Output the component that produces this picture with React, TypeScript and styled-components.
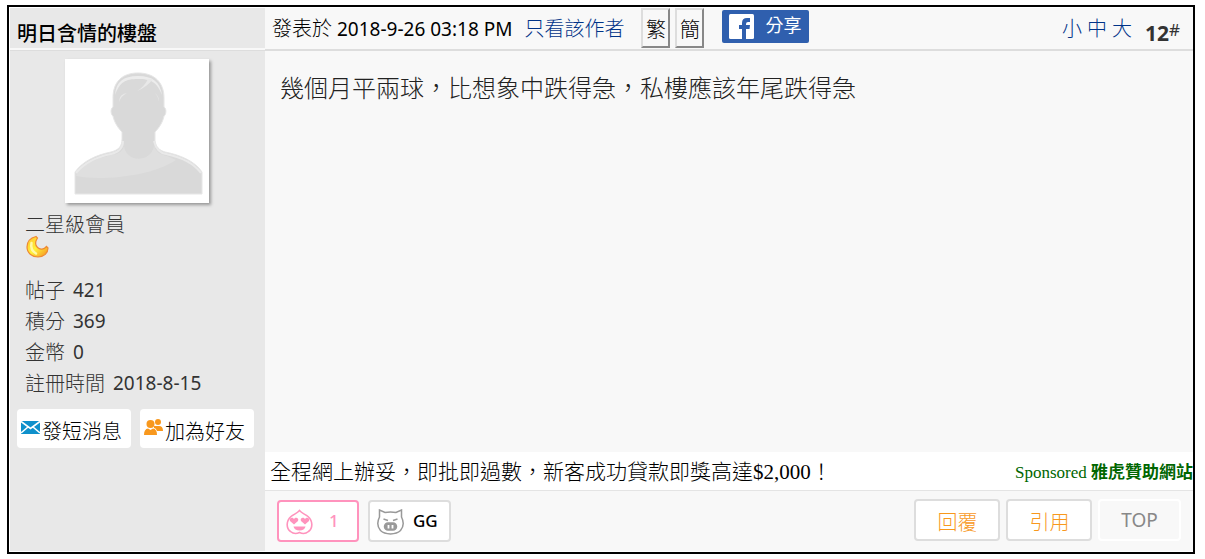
import React from "react";
import styled, { createGlobalStyle, css } from "styled-components";

const latin = `"Noto Sans"`;
const ui = `${latin}, "Noto Sans CJK TC", sans-serif`;
const cjk = `"Noto Sans CJK TC", ${latin}, sans-serif`;

const GlobalStyle = createGlobalStyle`
  *, *::before, *::after { box-sizing: border-box; }
  body { margin: 0; background: #fff; color: #000; font-family: ${ui}; font-size: 19px; }
  button { font-family: inherit; cursor: pointer; }
  a { text-decoration: none; }
`;

const Page = styled.main`
  padding: 5px 10px 5px 7px;
`;

const Post = styled.article`
  display: grid;
  grid-template-columns: 255px minmax(0, 1fr);
  border: 2px solid #000;
  padding: 1px 0 1px 1px;
`;

const Sidebar = styled.aside`
  background: #e8e8e8;
  display: flex;
  flex-direction: column;
`;

const Author = styled.h2`
  margin: 0;
  height: 42px;
  padding: 11px 7px 0;
  border-bottom: 2px solid #f8f8f8;
  font-size: 20px;
  line-height: 30px;
  font-weight: 500;
`;

const Profile = styled.div`
  border-top: 1px solid #ddd;
  padding: 8px 7px 0;
`;

const Avatar = styled.svg`
  display: block;
  width: 144px;
  height: 144px;
  margin: 0 0 0 48px;
  background: #fff;
  box-shadow: 2px 2px 3px rgba(0, 0, 0, 0.35);
`;

const Rank = styled.div`
  margin: 8px 0 0 8px;
  font: 300 20px/26px ${cjk};
  color: #333;
`;

const Moon = styled.svg`
  display: block;
  width: 24px;
  height: 24px;
  margin: -2px 0 0 8px;
`;

const Stats = styled.dl`
  margin: 16px 0 0 8px;
  color: #333;
  line-height: 31px;
`;

const Stat = styled.div`
  display: flex;
  gap: 8px;
  height: 31px;

  dt { font-size: 20px; font-weight: 300; }
  dd { margin: 0; }
`;

const Actions = styled.div`
  display: flex;
  gap: 9px;
  margin-top: 10px;
`;

const Action = styled.button`
  display: flex;
  align-items: center;
  justify-content: center;
  gap: 2px;
  width: 114px;
  height: 39px;
  padding: 4px 5px 0 0;
  border: 0;
  border-radius: 4px;
  background: #fff;
  color: #000;
  font-size: 20px;
  font-weight: 300;
  white-space: nowrap;

  svg { flex: none; width: 19px; height: 18px; margin-bottom: 8px; }
`;

const Main = styled.section`
  display: flex;
  flex-direction: column;
  background: #f8f8f8;
`;

const Header = styled.header`
  display: flex;
  align-items: flex-start;
  height: 43px;
  padding: 0 13px 0 7px;
  border-bottom: 2px solid #ddd;
  line-height: 41px;
  white-space: nowrap;
`;

const Posted = styled.span`
  font-size: 19px;
  span { font-size: 20px; font-weight: 300; }
`;

const HeaderLink = styled.a`
  color: #003388;
  font-size: 20px;
  font-weight: 300;
`;

const OnlyAuthor = styled(HeaderLink)`
  margin: 0 17px 0 12px;
`;

const ScriptButton = styled.button`
  width: 29px;
  height: 40px;
  margin-right: 5px;
  padding: 0;
  border: 2px solid;
  border-color: #ddd #888 #888 #ddd;
  background: #f8f8f8;
  color: #000;
  font-size: 20px;
  font-weight: 300;
`;

const Share = styled.button`
  display: flex;
  align-items: center;
  gap: 11px;
  width: 87px;
  height: 33px;
  margin: 2px 0 0 13px;
  padding: 0 0 0 7px;
  border: 0;
  border-radius: 2px;
  background: #2f5fae;
  color: #fff;
  font-size: 18px;
  line-height: 30px;

  svg { flex: none; width: 25px; height: 25px; }
  span { padding-bottom: 3px; }
`;

const Sizes = styled.nav`
  display: flex;
  gap: 5px;
  margin-left: auto;
`;

const Floor = styled.a`
  margin-left: 13px;
  color: #333;
  font: bold 21px/50px ${latin}, sans-serif;

  sup { font: 17px/1 ${latin}, sans-serif; vertical-align: 5px; }
`;

const Message = styled.div`
  min-height: 401px;
  padding: 18px 15px;
  color: #222;
  font: 300 24px/36px ${cjk};
`;

const Sponsor = styled.div`
  display: flex;
  justify-content: space-between;
  align-items: center;
  height: 39px;
  padding: 2px 0 0 5px;
  border-bottom: 1px solid #e4e4e4;
  background: #fff;
  overflow: hidden;
  white-space: nowrap;
`;

const AdLink = styled.a`
  color: #000;
  font: 300 21px/36px "Liberation Serif", "Noto Sans CJK TC", serif;
`;

const SponsorName = styled.a`
  padding-top: 2px;
  color: #060;
  font: 17px/36px "Liberation Serif", "Noto Sans CJK TC", serif;
`;

const Footer = styled.footer`
  display: flex;
  justify-content: space-between;
  height: 60px;
  padding: 8px 12px 0;
`;

const Group = styled.div<{ $gap: number }>`
  display: flex;
  gap: ${(p) => p.$gap}px;
`;

const footButton = css`
  height: 42px;
  border: 2px solid #ddd;
  border-radius: 4px;
  background: #fff;
`;

const Reaction = styled.button<{ $active?: boolean }>`
  ${footButton}
  display: flex;
  align-items: center;
  width: ${(p) => (p.$active ? 82 : 83)}px;
  margin-top: 1px;
  padding: 0 7px 2px;
  gap: ${(p) => (p.$active ? 16 : 9)}px;
  font-size: 17px;
  font-weight: 500;
  color: ${(p) => (p.$active ? "#ff93bd" : "#000")};
  border-color: ${(p) => (p.$active ? "#ff93bd" : "#ddd")};

  svg { flex: none; width: 27px; height: 26px; margin-top: 3px; }
`;

const FootLink = styled.button<{ $plain?: boolean }>`
  ${footButton}
  width: ${(p) => (p.$plain ? 83 : 86)}px;
  padding: 3px 0 0 1px;
  font-size: 20px;
  font-weight: 300;
  color: #f8981d;
  ${(p) =>
    p.$plain &&
    css`
      padding: 0;
      border-color: #fff;
      background: #f8f8f8;
      color: #888;
      font-size: 19px;
      font-weight: 400;
    `}
`;

const AvatarArt = () => (
  <Avatar viewBox="0 0 144 144" role="img" aria-label="avatar">
    <path d="M10 135V113C18 102 31 96 46 93 54 91 57 87 57 80V73C52 68 49 62 48 57 46 56 45 50 48 48V39C48 23 57 14 73 14S99 23 99 39V48C102 50 101 56 99 57 98 62 95 68 90 73V82C91 88 94 91 100 93 115 96 130 102 137 113V135Z" fill="#d9d9d9" stroke="#e6e6e6" />
    <path d="M11 117C15 105 34 99 47 96 55 95 58 91 59 87 61 104 86 104 89 87 91 93 96 96 102 97L111 101C86 118 35 122 11 117Z" fill="#dfdfdf" />
    <path d="M50 36C51 23 58 17 73 17S95 23 97 36C92 23 86 20 73 20S55 23 50 36Z" fill="#ececec" />
    <path d="M72 32Q82 28 88 20L83 20Q79 28 72 32M54 43Q54 35 62 34Q56 37 54 43M94 43Q94 37 90 34Q93 37 94 43" fill="#e8e8e8" />
    <path d="M11 114C20 103 31 98 46 95 55 93 58 88 58 82M89 82C91 91 95 94 101 95 115 98 128 103 136 114" fill="none" stroke="#e9e9e9" strokeWidth="2" />
  </Avatar>
);

const MoonArt = () => (
  <Moon viewBox="0 0 24 24" role="img" aria-label="moon">
    <defs>
      <linearGradient id="moon" x1="0" y1="0" x2="1" y2="1">
        <stop offset="0" stopColor="#ffc02b" />
        <stop offset=".5" stopColor="#fff23a" />
        <stop offset="1" stopColor="#f58a1f" />
      </linearGradient>
    </defs>
    <path d="M11 1.500C5 3 2 7 2 12 2 18 7 22 13 22 19 22 23 18 23 13L21.500 11.500C19 14.500 15 15 12.500 12.500 10 10 10.500 6 12.500 3Z" fill="url(#moon)" stroke="#ee8a34" strokeWidth="1.2" />
    <path d="M6.500 8Q5 15 11 18.500" fill="none" stroke="#fffaa8" strokeWidth="2.5" strokeLinecap="round" />
  </Moon>
);

const Mail = () => (
  <svg viewBox="0 0 19 18" aria-hidden="true">
    <path d="M0 3H19V16H0Z" fill="#0e90cb" />
    <path d="M0 3.5L9.5 10.5L19 3.5M0 15L7 9M19 15L12 9" fill="none" stroke="#fff" strokeWidth="1.6" />
  </svg>
);

const People = () => (
  <svg viewBox="0 0 19 18" aria-hidden="true" fill="#f8981d">
    <circle cx="14" cy="4" r="3" />
    <path d="M10 8H15Q19 8 19 13H13Q12 10 10 10Z" />
    <circle cx="6.5" cy="6" r="4" />
    <path d="M0 17Q0 11 4 10.5L6.5 12L9 10.5Q13 11 13 17Z" />
  </svg>
);

const Facebook = () => (
  <svg viewBox="0 0 25 25" aria-hidden="true">
    <rect width="25" height="25" rx="1.5" fill="#fff" />
    <path d="M13 25V15H10V11H13V9Q13 4 18 4H21V8H19Q17 8 17 10V11H21L20.500 15H17V25Z" fill="#2f5fae" />
  </svg>
);

const Peach = () => (
  <svg viewBox="0 0 27 26" aria-hidden="true">
    <path d="M13.500 1.500C11 4.500 8 5 5 7.500 0 12 0 19 4.500 22.500Q8.500 26 13.500 23.500Q18.500 26 22.500 22.500C27 19 27 12 22 7.500 19 5 16 4.500 13.500 1.500Z" fill="#fff" stroke="#ff93bd" strokeWidth="1.6" />
    <path d="M8 15.500L4 12C2.500 9 6.500 7.500 8 10 9.500 7.500 13.500 9 12 12ZM19 15.500L15 12C13.500 9 17.500 7.500 19 10 20.500 7.500 24.500 9 23 12Z" fill="#ff93bd" />
    <path d="M7.500 17.500H19.500Q18.500 21.500 13.500 21.500T7.500 17.500Z" fill="#ff93bd" />
  </svg>
);

const Pig = () => (
  <svg viewBox="0 0 27 26" aria-hidden="true" fill="none" stroke="#999" strokeWidth="1.5">
    <path d="M2.500 8V1L8 3.500Q13.500 2.500 19 3.500L24.500 1V8C27 13 26.500 18 23.500 21.500 19 26 8 26 3.500 21.500 .5 18 0 13 2.500 8Z" />
    <path d="M6.500 10L11 11.500M20.500 10L16 11.500" />
    <rect x="7.500" y="14" width="12" height="7" rx="3.5" fill="#999" />
    <path d="M11.500 16V19.500M15.500 16V19.500" stroke="#fff" strokeWidth="1.8" />
  </svg>
);

const stats = [
  ["帖子", "421"],
  ["積分", "369"],
  ["金幣", "0"],
  ["註冊時間", "2018-8-15"],
];

export default function App() {
  return (
    <Page>
      <GlobalStyle />
      <Post lang="zh-Hant">
        <Sidebar>
          <Author>明日含情的樓盤</Author>
          <Profile>
            <AvatarArt />
            <Rank>二星級會員</Rank>
            <MoonArt />
            <Stats>
              {stats.map(([label, value]) => (
                <Stat key={label}>
                  <dt>{label}</dt>
                  <dd>{value}</dd>
                </Stat>
              ))}
            </Stats>
            <Actions>
              <Action type="button"><Mail />發短消息</Action>
              <Action type="button"><People />加為好友</Action>
            </Actions>
          </Profile>
        </Sidebar>
        <Main>
          <Header>
            <Posted><span>發表於</span> 2018-9-26 03:18 PM</Posted>
            <OnlyAuthor href="#author">只看該作者</OnlyAuthor>
            <ScriptButton type="button">繁</ScriptButton>
            <ScriptButton type="button">簡</ScriptButton>
            <Share type="button"><Facebook /><span>分享</span></Share>
            <Sizes>
              <HeaderLink href="#small">小</HeaderLink>
              <HeaderLink href="#medium">中</HeaderLink>
              <HeaderLink href="#large">大</HeaderLink>
            </Sizes>
            <Floor href="#post12">12<sup>#</sup></Floor>
          </Header>
          <Message>幾個月平兩球，比想象中跌得急，私樓應該年尾跌得急</Message>
          <Sponsor>
            <AdLink href="#ad">全程網上辦妥，即批即過數，新客成功貸款即獎高達$2,000！</AdLink>
            <SponsorName href="#sponsor">Sponsored <b>雅虎贊助網站</b></SponsorName>
          </Sponsor>
          <Footer>
            <Group $gap={9}>
              <Reaction type="button" $active><Peach />1</Reaction>
              <Reaction type="button"><Pig />GG</Reaction>
            </Group>
            <Group $gap={6}>
              <FootLink type="button">回覆</FootLink>
              <FootLink type="button">引用</FootLink>
              <FootLink type="button" $plain>TOP</FootLink>
            </Group>
          </Footer>
        </Main>
      </Post>
    </Page>
  );
}
